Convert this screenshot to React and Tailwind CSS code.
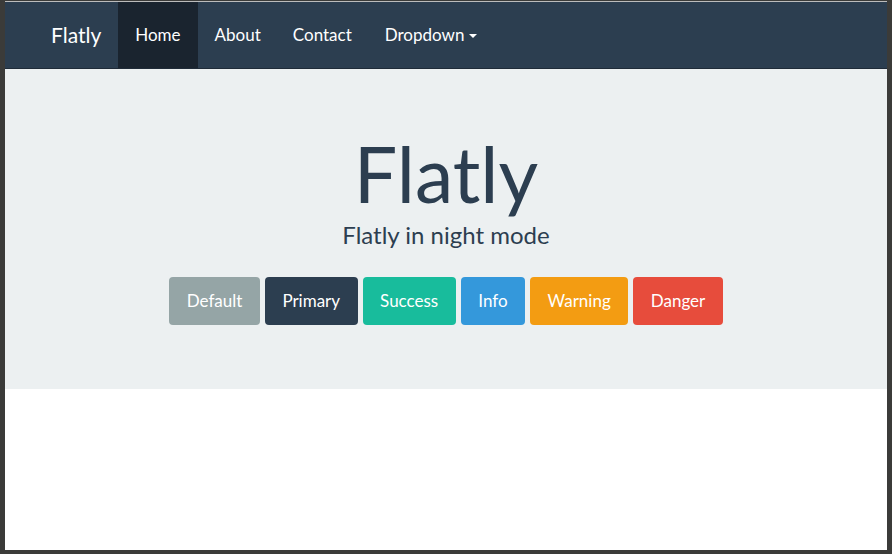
export default function App() {
    const buttons = [
        { label: "Default", cls: "bg-[#95a5a6]" },
        { label: "Primary", cls: "bg-[#2c3e50]" },
        { label: "Success", cls: "bg-[#18bc9c]" },
        { label: "Info", cls: "bg-[#3498db]" },
        { label: "Warning", cls: "bg-[#f39c12]" },
        { label: "Danger", cls: "bg-[#e74c3c]" },
    ];

    return (
        <div className="h-[554px] w-[892px] bg-[#3b3b39] pl-[5px] pr-[5px] pb-[4px] pt-[1px] font-['Lato',sans-serif]">
            <div className="flex h-full flex-col border-t border-[#bcbcbc] bg-white">
                <nav className="flex h-[67px] items-stretch border-b border-[#1f2b38] bg-[#2c3e50] pl-[46px] text-white">
                    <div className="flex items-center pr-[17px] text-[21px]">Flatly</div>
                    <a className="flex items-center bg-[#1a242f] px-[17px] text-[17px]">Home</a>
                    <a className="flex items-center pl-[17px] pr-[16px] text-[17px]">About</a>
                    <a className="flex items-center pl-[16px] pr-[17px] text-[17px]">Contact</a>
                    <a className="flex items-center px-[16px] text-[17px]">
                        Dropdown
                        <span className="ml-[5px] mt-[2px] inline-block h-0 w-0 border-x-[4px] border-t-[4px] border-x-transparent border-t-white"></span>
                    </a>
                </nav>
                <section className="flex h-[320px] flex-col items-center bg-[#ecf0f1] pt-[58px] text-[#2c3e50]">
                    <h1 className="text-[77px] leading-[92px] font-normal">Flatly</h1>
                    <p className="mt-[-1px] text-[24px] leading-[34px]">Flatly in night mode</p>
                    <div className="mt-[25px] flex gap-[5px]">
                        {buttons.map((b) => (
                            <button
                                key={b.label}
                                className={`${b.cls} rounded-[4px] px-[17.5px] py-[11px] text-[17px] leading-[26px] text-white`}
                            >
                                {b.label}
                            </button>
                        ))}
                    </div>
                </section>
                <div className="flex-1 bg-white"></div>
            </div>
        </div>
    );
}
